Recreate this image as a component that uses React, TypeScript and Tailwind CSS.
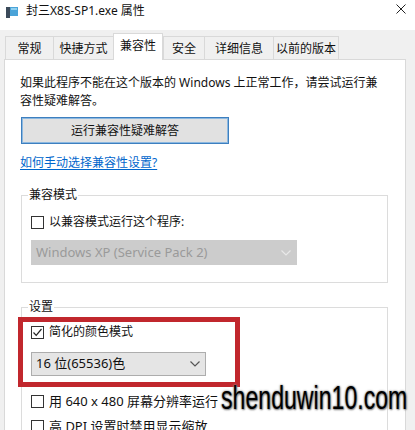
import React from "react";

const font = { fontFamily: '"Noto Sans", "Noto Sans CJK SC", sans-serif' };

function Chevron({ color }: { color: string }) {
  return (
    <svg width="10" height="6" viewBox="0 0 10 6">
      <path d="M0.5 0.5 L5 5 L9.5 0.5" fill="none" stroke={color} strokeWidth="1.2" />
    </svg>
  );
}

function Checkbox({ checked }: { checked?: boolean }) {
  return (
    <div className="w-[13px] h-[13px] border border-[#333] bg-white flex items-center justify-center shrink-0">
      {checked && (
        <svg width="11" height="11" viewBox="0 0 11 11">
          <path d="M1.5 5.5 L4.2 8.3 L9.5 2" fill="none" stroke="#222" strokeWidth="1.2" />
        </svg>
      )}
    </div>
  );
}

export default function App() {
  const tabs = [
    { t: "常规", w: "w-[48px]" },
    { t: "快捷方式", w: "w-[60px]" },
    { t: "兼容性", w: "w-[50px]", sel: true },
    { t: "安全", w: "w-[41px]" },
    { t: "详细信息", w: "w-[69px]" },
    { t: "以前的版本", w: "w-[66px]" },
  ];
  return (
    <div className="w-[415px] h-[430px] bg-[#f0f0f0] relative overflow-hidden flex flex-col text-[12px] text-[#111]" style={font}>
      {/* Title bar */}
      <div className="h-[30px] bg-white flex items-center shrink-0">
        <svg className="ml-[6px] -mt-[6px]" width="12" height="11" viewBox="0 0 12 11">
          <rect x="0" y="0" width="4" height="11" fill="#3b4a5a" />
          <rect x="4" y="0" width="8" height="9" fill="#4aa3d8" />
          <rect x="5" y="1" width="6" height="2" fill="#8fd0f0" />
        </svg>
        <span className="ml-[8px] leading-[18px] -mt-[8px]">封三X8S-SP1.exe 属性</span>
        <svg className="ml-auto mr-[9px] -mt-[12px]" width="10" height="10" viewBox="0 0 10 10">
          <path d="M0.5 0.5 L9.5 9.5 M9.5 0.5 L0.5 9.5" stroke="#222" strokeWidth="1" />
        </svg>
      </div>
      {/* Tabs */}
      <div className="h-[29px] flex items-end pl-[5px] shrink-0">
        {tabs.map((tab, i) => (
          <div
            key={tab.t}
            className={
              tab.sel
                ? `${tab.w} h-[27px] -mb-px relative z-10 bg-white border-t border-l border-r border-[#d9d9d9] flex items-start justify-center pt-[3px] leading-[18px]`
                : `${tab.w} h-[23px] bg-[#f0f0f0] border-t border-l border-[#d9d9d9] flex items-start justify-center pt-[3px] leading-[18px] ${i === tabs.length - 1 ? "border-r" : ""}`
            }
          >
            {tab.t}
          </div>
        ))}
      </div>
      {/* Panel */}
      <div className="ml-[4px] w-[402px] flex-1 bg-white border border-[#d9d9d9] pl-[15px] pt-[14px] flex flex-col items-start">
        <p className="leading-[18px] w-[366px]">
          如果此程序不能在这个版本的 Windows 上正常工作，请尝试运行兼容性疑难解答。
        </p>
        <button className="mt-[7px] ml-px w-[208px] h-[27px] bg-[#e1e1e1] border border-[#3d7fbf] shadow-[inset_0_0_0_1px_#8cb8e0] flex items-center justify-center leading-[18px]">
          运行兼容性疑难解答
        </button>
        <a className="mt-[10px] leading-[18px] text-[#0066cc] underline underline-offset-2">如何手动选择兼容性设置?</a>

        <fieldset className="mt-[14px] ml-px w-[367px] border border-[#dcdcdc] px-[9px] pb-[17px]">
          <legend className="leading-[18px] -ml-[3px] px-px">兼容模式</legend>
          <div className="mt-[9px] flex items-center h-[18px]">
            <Checkbox />
            <span className="ml-[5px] leading-[18px]">以兼容模式运行这个程序:</span>
          </div>
          <div className="mt-[9px] w-[266px] h-[25px] bg-[#cccccc] flex items-center pl-[5px] pr-[6px] text-[13px] text-[#9a9a9a]">
            <span>Windows XP (Service Pack 2)</span>
            <span className="ml-auto flex"><Chevron color="#e8e8e8" /></span>
          </div>
        </fieldset>

        <fieldset className="mt-[15px] ml-px w-[367px] border border-[#dcdcdc] px-[9px] pb-[20px]">
          <legend className="leading-[18px] -ml-[3px] px-px">设置</legend>
          <div className="mt-[7px] flex items-center h-[18px]">
            <Checkbox checked />
            <span className="ml-[5px] leading-[18px]">简化的颜色模式</span>
          </div>
          <div className="mt-[11px] w-[175px] h-[24px] bg-[#e5e5e5] border border-[#adadad] flex items-center pl-[4px] pr-[5px] text-[13px]">
            <span>16 位(65536)色</span>
            <span className="ml-auto flex"><Chevron color="#555" /></span>
          </div>
          <div className="mt-[16px] flex items-center h-[18px]">
            <Checkbox />
            <span className="ml-[5px] leading-[18px] text-[13px]">用 640 x 480 屏幕分辨率运行</span>
          </div>
          <div className="mt-[7px] flex items-center h-[18px]">
            <Checkbox />
            <span className="ml-[5px] leading-[18px] text-[13px]">高 DPI 设置时禁用显示缩放</span>
          </div>
        </fieldset>
      </div>

      {/* Red annotation rectangle */}
      <div className="absolute left-[18px] top-[317px] w-[222px] h-[70px] border-[5px] border-[#c1272d] pointer-events-none" />

      {/* Watermark */}
      <div
        className="absolute left-[221px] top-[377px] text-[34px] leading-[40px] text-black origin-left scale-x-[0.68] whitespace-nowrap [text-shadow:0_0_2px_#888,0_0_3px_#aaa,1px_1px_2px_#777]"
        style={{ fontFamily: '"Liberation Sans", Arial, sans-serif' }}
      >
        shenduwin10.com
      </div>
    </div>
  );
}
